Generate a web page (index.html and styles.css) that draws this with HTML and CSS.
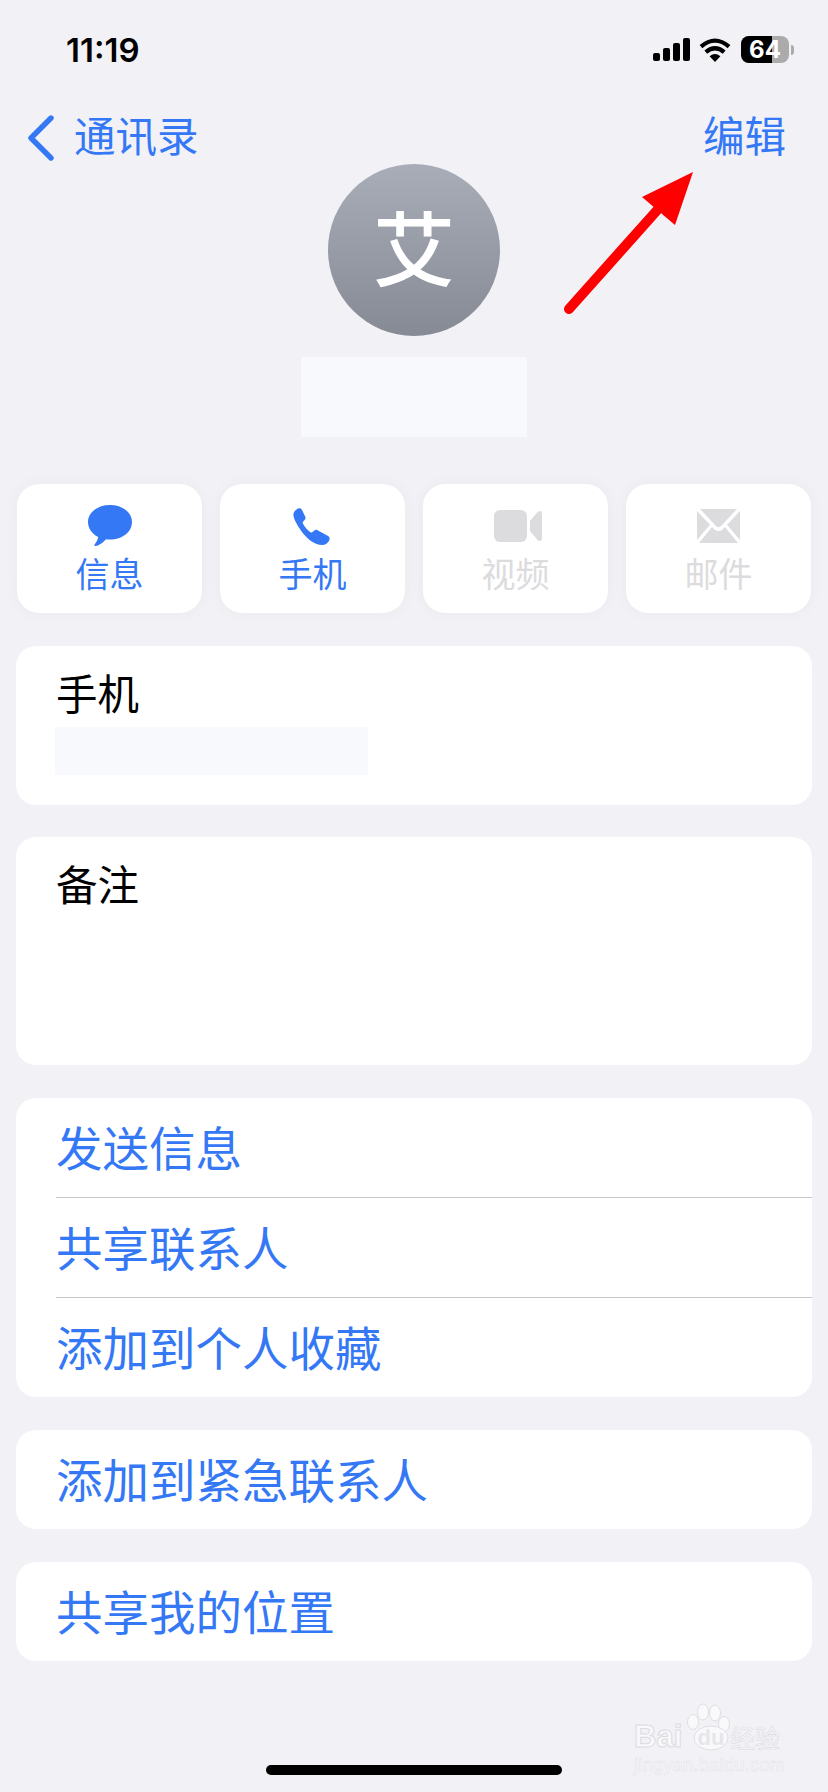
FILE: index.html
```html
<!DOCTYPE html>
<html lang="zh-CN">
  <head>
    <meta charset="UTF-8" />
    <title>通讯录</title>
    <link rel="stylesheet" href="styles.css">
  </head>
  <body>
    <div class="status">
      <span class="time">11:19</span>
      <div class="status-icons">
        <svg class="signal" width="37" height="23" viewBox="0 0 37 23">
          <rect x="0" y="15" width="7" height="8" rx="2" />
          <rect x="10" y="10" width="7" height="13" rx="2" />
          <rect x="20" y="5" width="7" height="18" rx="2" />
          <rect x="30" y="0" width="7" height="23" rx="2" />
        </svg>
        <svg class="wifi" width="32" height="24" viewBox="0 0 32 24">
          <path d="M16 24 L10.6 18.2 Q16 13.6 21.4 18.2 Z" />
          <path d="M6.8 14.2 Q16 6.4 25.2 14.2" fill="none" stroke="#000" stroke-width="4.2" />
          <path d="M2 8.6 Q16 -3.4 30 8.6" fill="none" stroke="#000" stroke-width="4.2" />
        </svg>
        <div class="battery">
          <div class="battery-body">
            <div class="battery-fill"></div>
            <span class="battery-num">64</span>
          </div>
          <div class="battery-nub"></div>
        </div>
      </div>
    </div>

    <div class="nav">
      <div class="back">
        <svg width="27" height="46" viewBox="0 0 27 46">
          <path d="M24 3 L4 23 L24 43" fill="none" stroke="#3478f6" stroke-width="5.4" stroke-linecap="round" stroke-linejoin="round" />
        </svg>
        <span>通讯录</span>
      </div>
      <span class="edit">编辑</span>
    </div>

    <div class="avatar">艾</div>
    <div class="name-block"></div>

    <div class="actions">
      <div class="action">
        <svg class="icon-msg" width="44" height="41" viewBox="0 0 44 41">
          <path fill="#3478f6" d="M22 0 C34.5 0 44 7.4 44 17 C44 27 34.5 34.5 22 34.5 C20.6 34.5 19.4 34.4 18 34.2 C15.6 37 11.4 40.4 7.6 41 C6.4 41.1 5.8 40.2 6.6 39.4 C8 37.8 9.6 35.4 10.2 32 C4 29 0 23.4 0 17 C0 7.4 9.5 0 22 0 Z" />
        </svg>
        <span>信息</span>
      </div>
      <div class="action">
        <svg class="icon-phone" width="37" height="37" viewBox="0 0 37 37">
          <path fill="#3478f6" d="M5.2 0.6 C6.8 -0.2 8.2 0.4 9 2 L12.2 8.6 C12.8 10 12.6 11 11.6 12 L10 13.8 C9.6 14.4 9.6 15 10 15.8 C11.6 18.8 14.6 22.4 17.4 24.2 C18 24.6 18.6 24.6 19.2 24.2 L21.4 22.4 C22.4 21.6 23.6 21.6 24.6 22.2 L34.6 27.8 C36.4 28.8 37 30.2 36.4 32 C35.2 35 32.4 37 29 37 C22 37 14.2 31 8.6 23.4 C3.4 16.4 0 9.6 0.4 6 C0.8 3.6 2.8 1.6 5.2 0.6 Z" />
        </svg>
        <span>手机</span>
      </div>
      <div class="action off">
        <svg class="icon-video" width="48" height="32" viewBox="0 0 48 32">
          <rect x="0" y="0" width="33" height="32" rx="6" fill="#dcdcde" />
          <path fill="#dcdcde" d="M36 11 L43.6 2 C45.2 0.4 48 1 48 3.4 L48 28.6 C48 31 45.2 31.6 43.6 30 L36 21 Z" />
        </svg>
        <span>视频</span>
      </div>
      <div class="action off">
        <svg class="icon-mail" width="43" height="34" viewBox="0 0 43 34">
          <path fill="#dcdcde" d="M3 0 L40 0 L24 17 Q21.5 19.4 19 17 Z" />
          <path fill="#dcdcde" d="M0 2 L0 31 L13 15.8 Z" />
          <path fill="#dcdcde" d="M43 2 L43 31 L30 15.8 Z" />
          <path fill="#dcdcde" d="M2 34 L41 34 L28 18 L25.6 20.4 Q21.5 23.4 17.4 20.4 L15 18 Z" />
        </svg>
        <span>邮件</span>
      </div>
    </div>

    <div class="card phone-card">
      <div class="field-label">手机</div>
      <div class="phone-block"></div>
    </div>

    <div class="card notes-card">
      <div class="field-label">备注</div>
    </div>

    <div class="card link-list">
      <div class="link">发送信息</div>
      <div class="link">共享联系人</div>
      <div class="link">添加到个人收藏</div>
    </div>

    <div class="card link-list">
      <div class="link">添加到紧急联系人</div>
    </div>

    <div class="card link-list">
      <div class="link">共享我的位置</div>
    </div>

    <div class="home-bar"></div>

    <svg class="arrow" width="828" height="340" viewBox="0 0 828 340">
      <path d="M569 309 L660 207" fill="none" stroke="#fe0000" stroke-width="10" stroke-linecap="round" />
      <path fill="#fe0000" d="M693 172 L642 197 L675 225 Z" />
    </svg>

    <div class="watermark">
      <svg class="paw" width="46" height="48" viewBox="0 0 46 48">
        <ellipse cx="8" cy="19" rx="5.5" ry="7.5" />
        <ellipse cx="18" cy="9" rx="5.5" ry="8" />
        <ellipse cx="30" cy="10" rx="5.5" ry="8" />
        <ellipse cx="39" cy="21" rx="5.5" ry="7.5" />
        <ellipse cx="26" cy="35" rx="17" ry="12" />
      </svg>
      <span class="wm-bai">Bai</span>
      <span class="wm-du">du</span>
      <span class="wm-cn">经验</span>
      <div class="wm-url">jingyan.baidu.com</div>
    </div>
  </body>
</html>
```

FILE: styles.css
```css
* {
  box-sizing: border-box;
}
body {
  margin: 0;
  width: 828px;
  height: 1792px;
  position: relative;
  overflow: hidden;
  background: #f1f1f6;
  font-family: "Noto Sans CJK SC", "Noto Sans", sans-serif;
  color: #000;
}
.status {
  height: 100px;
  padding: 30px 34px 0 66px;
  display: flex;
  justify-content: space-between;
  align-items: flex-start;
}
.time {
  font-family: Inter, sans-serif;
  font-weight: 600;
  font-size: 33px;
  line-height: 40px;
}
.status-icons {
  display: flex;
  align-items: center;
  gap: 9px;
  padding-top: 6px;
}
.battery {
  display: flex;
  align-items: center;
  gap: 2px;
  margin-left: 1px;
}
.battery-body {
  width: 48px;
  height: 27px;
  border-radius: 8px;
  background: #ababab;
  overflow: hidden;
  position: relative;
}
.battery-fill {
  width: 31px;
  height: 100%;
  background: #000;
}
.battery-num {
  position: absolute;
  inset: 0;
  text-align: center;
  color: #fff;
  font-family: Inter, sans-serif;
  font-weight: 700;
  font-size: 24px;
  line-height: 27px;
}
.battery-nub {
  width: 3px;
  height: 10px;
  border-radius: 0 3px 3px 0;
  background: #ababab;
}
.nav {
  height: 64px;
  padding: 0 16px 0 27px;
  display: flex;
  justify-content: space-between;
  align-items: flex-start;
  color: #3478f6;
  font-size: 41.5px;
  line-height: 68px;
}
.back {
  display: flex;
  align-items: flex-start;
  gap: 20px;
}
.back svg {
  margin-top: 15px;
}
.edit {
  margin-right: 26px;
}
.avatar {
  width: 172px;
  height: 172px;
  margin: 0 auto;
  border-radius: 50%;
  background: linear-gradient(#a9adb8, #868a94);
  color: #fff;
  font-size: 82px;
  font-weight: 500;
  line-height: 162px;
  text-align: center;
}
.name-block {
  width: 226px;
  height: 80px;
  margin: 21px 0 47px 301px;
  background: #f8f9fd;
}
.actions {
  display: grid;
  grid-template-columns: repeat(4, 185px);
  gap: 18px;
  padding: 0 17px;
  margin-bottom: 33px;
}
.action {
  height: 129px;
  background: #fff;
  border-radius: 22px;
  box-shadow: 0 0 16px rgba(0, 0, 0, 0.04);
  display: flex;
  flex-direction: column;
  align-items: center;
  color: #3478f6;
  font-size: 34px;
  line-height: 40px;
  position: relative;
}
.action svg {
  flex: none;
}
.icon-msg {
  margin-top: 21px;
}
.icon-phone {
  margin: 24px 2px 0 0;
}
.icon-video {
  margin: 26px 0 0 5px;
}
.icon-mail {
  margin-top: 25px;
}
.action span {
  position: absolute;
  top: 69px;
}
.action.off {
  color: #dcdcde;
}
.card {
  margin: 0 16px 33px;
  background: #fff;
  border-radius: 20px;
}
.phone-card {
  height: 159px;
  margin-bottom: 32px;
  padding: 18px 0 0 40px;
}
.field-label {
  font-size: 41.5px;
  line-height: 56px;
}
.phone-block {
  width: 313px;
  height: 48px;
  margin: 7px 0 0 -1px;
  background: #f8f9fd;
}
.notes-card {
  height: 228px;
  padding: 18px 0 0 40px;
}
.link-list {
  padding-left: 40px;
}
.link {
  height: 100px;
  color: #3478f6;
  font-size: 46.5px;
  line-height: 96px;
  border-bottom: 1px solid #c6c6c8;
}
.link:last-child {
  height: 99px;
  border-bottom: none;
}
.home-bar {
  position: absolute;
  left: 266px;
  top: 1765px;
  width: 296px;
  height: 10px;
  border-radius: 5px;
  background: #000;
}
.arrow {
  position: absolute;
  left: 0;
  top: 0;
}
.watermark {
  position: absolute;
  left: 634px;
  top: 1703px;
  width: 150px;
  height: 72px;
  color: #f9f9fb;
  font-family: "Liberation Sans", sans-serif;
  white-space: nowrap;
}
.paw {
  position: absolute;
  left: 51px;
  top: 0;
  fill: #f9f9fb;
  stroke: #dfdfe3;
}
.wm-bai {
  position: absolute;
  left: 0;
  top: 17px;
  font-weight: 700;
  font-size: 31px;
  line-height: 34px;
  -webkit-text-stroke: 1px #dcdce0;
}
.wm-du {
  position: absolute;
  left: 61px;
  top: 20px;
  width: 32px;
  text-align: center;
  font-weight: 700;
  font-size: 22px;
  line-height: 30px;
  color: #e6e6ea;
}
.wm-cn {
  position: absolute;
  left: 96px;
  top: 17px;
  font-family: "Noto Sans CJK SC", sans-serif;
  font-size: 25px;
  line-height: 34px;
  -webkit-text-stroke: 0.6px #dcdce0;
}
.wm-url {
  position: absolute;
  left: 0;
  top: 52px;
  font-size: 18px;
  line-height: 20px;
  letter-spacing: 0.02em;
  -webkit-text-stroke: 0.5px #e2e2e6;
}
```
